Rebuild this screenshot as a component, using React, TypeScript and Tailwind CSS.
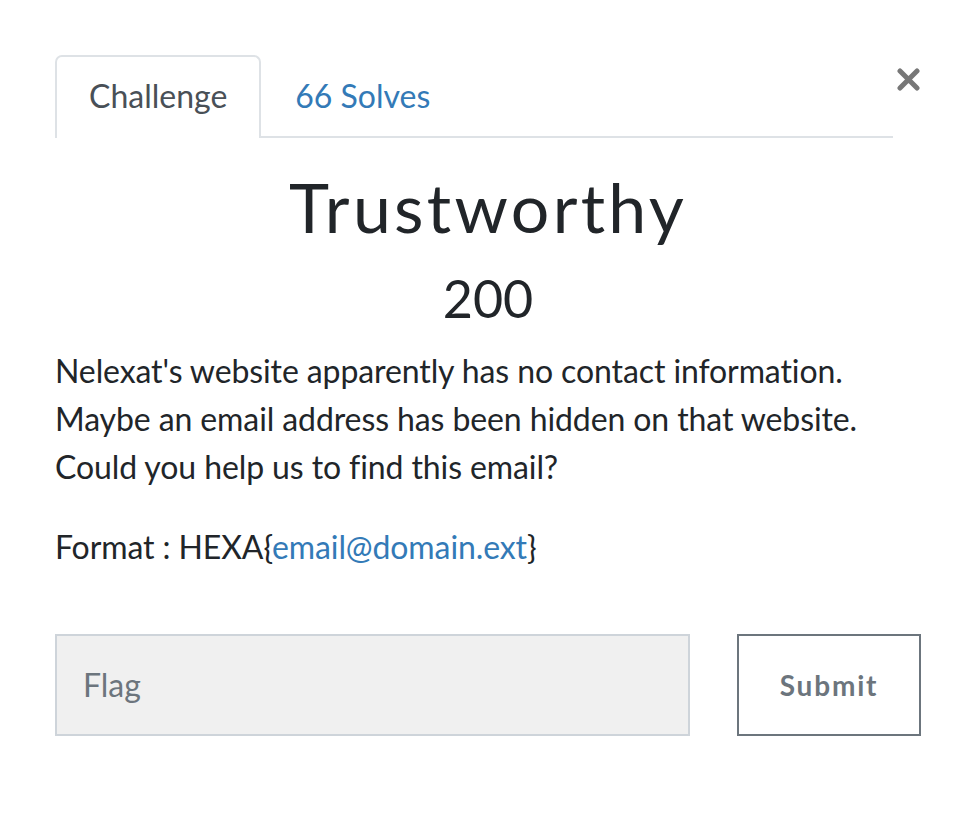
import React from "react";

export default function App() {
  return (
    <div className="min-h-[826px] w-[978px] bg-white text-[#212529]" style={{ fontFamily: "Lato, 'Liberation Sans', sans-serif" }}>
      <div className="ml-[55px] w-[866px] pt-[55px]">
        {/* header: tabs + close */}
        <div className="flex items-start">
          <div className="flex w-[838px] border-b-[2px] border-[#dee2e6]">
            <div className="-mb-[2px] rounded-t-[7px] border-[2px] border-b-0 border-[#dee2e6] bg-white px-[32px] pb-[18px] pt-[15px] text-[32px] leading-[48px] text-[#495057]">
              Challenge
            </div>
            <div className="px-[34px] pb-[15px] pt-[17px] text-[32px] leading-[48px] text-[#337ab7]">
              66 Solves
            </div>
          </div>
          <button className="ml-[4px] mt-[13px] flex h-[23px] w-[23px] items-center justify-center">
            <svg width="23" height="23" viewBox="0 0 23 23">
              <path d="M3 3 L20 20 M20 3 L3 20" stroke="#777777" strokeWidth="5" strokeLinecap="round" />
            </svg>
          </button>
        </div>

        {/* title */}
        <h1 className="mt-[28px] text-center text-[68px] font-normal leading-[82px] tracking-[3.3px] text-[#212529]">
          Trustworthy
        </h1>
        <div className="mt-[19px] text-center text-[52px] leading-[62px]">200</div>

        {/* description */}
        <div className="mt-[18px] text-[32px] leading-[48px] tracking-[-0.1px]">
          <p className="mb-[32px]">
            Nelexat's website apparently has no contact information.
            <br />
            Maybe an email address has been hidden on that website.
            <br />
            Could you help us to find this email?
          </p>
          <p>
            Format : HEXA{"{"}
            <a className="text-[#337ab7]">email@domain.ext</a>
            {"}"}
          </p>
        </div>

        {/* form */}
        <div className="mt-[63px] flex items-start">
          <div className="flex h-[102px] w-[635px] items-center border-[2px] border-[#ced4da] bg-[#f0f0f0] pl-[26px] text-[32px] text-[#6c757d]">
            Flag
          </div>
          <button className="ml-[47px] flex h-[102px] w-[184px] items-center justify-center border-[2px] border-[#6c757d] bg-white text-[28px] font-bold tracking-[1.8px] text-[#6c757d]">
            Submit
          </button>
        </div>
      </div>
    </div>
  );
}
